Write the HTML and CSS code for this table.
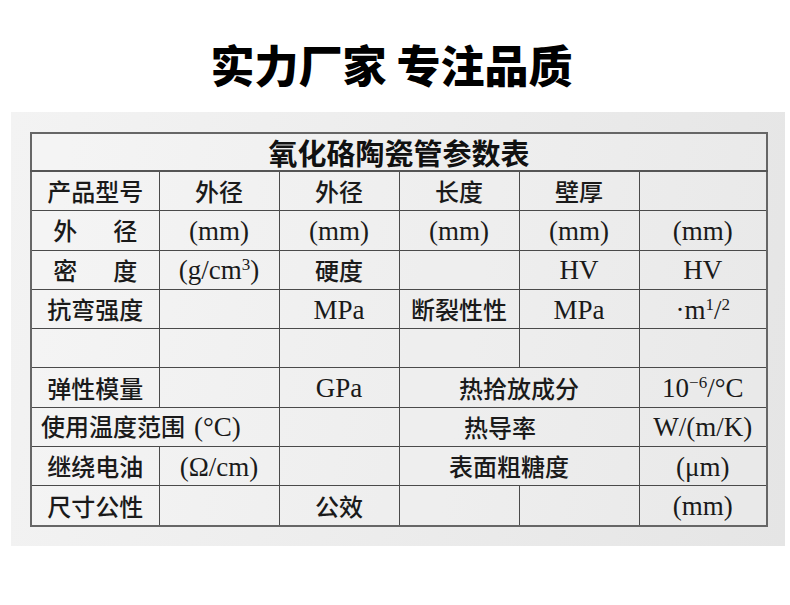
FILE: index.html
```html
<!DOCTYPE html>
<html lang="zh">
<head>
<meta charset="utf-8">
<link rel="stylesheet" href="styles.css">
</head>
<body>
<div class="heading">实力厂家 专注品质</div>
<div class="panel">
  <table class="spec">
    <colgroup>
      <col class="c-wide"><col class="c-mid"><col class="c-mid"><col class="c-mid"><col class="c-mid"><col class="c-wide">
    </colgroup>
    <tr class="title"><td colspan="6">氧化硌陶瓷管参数表</td></tr>
    <tr><td>产品型号</td><td>外径</td><td>外径</td><td>长度</td><td>壁厚</td><td></td></tr>
    <tr><td>外<span class="gap"></span>径</td><td><span class="u">(mm)</span></td><td><span class="u">(mm)</span></td><td><span class="u">(mm)</span></td><td><span class="u">(mm)</span></td><td><span class="u">(mm)</span></td></tr>
    <tr><td>密<span class="gap"></span>度</td><td><span class="u">(g/cm<sup>3</sup>)</span></td><td>硬度</td><td></td><td><span class="u">HV</span></td><td><span class="u">HV</span></td></tr>
    <tr><td>抗弯强度</td><td></td><td><span class="u">MPa</span></td><td>断裂性性</td><td><span class="u">MPa</span></td><td><span class="u">·m<sup>1</sup>/<sup>2</sup></span></td></tr>
    <tr><td></td><td></td><td></td><td></td><td></td><td></td></tr>
    <tr><td>弹性模量</td><td></td><td><span class="u">GPa</span></td><td colspan="2">热拾放成分</td><td><span class="u">10<sup>−6</sup>/°C</span></td></tr>
    <tr><td colspan="2" class="left">使用温度范围<span class="u unit-gap">(°C)</span></td><td></td><td colspan="2" class="shift">热导率</td><td><span class="u">W/(m/K)</span></td></tr>
    <tr><td>继绕电油</td><td><span class="u">(Ω/cm)</span></td><td></td><td colspan="2" class="shift-s">表面粗糖度</td><td><span class="u">(μm)</span></td></tr>
    <tr><td>尺寸公性</td><td></td><td>公效</td><td></td><td></td><td><span class="u">(mm)</span></td></tr>
  </table>
</div>
</body>
</html>
```
FILE: styles.css
```css
html, body {
  margin: 0;
  padding: 0;
  background: #ffffff;
}
body {
  width: 790px;
  height: 605px;
  overflow: hidden;
  font-family: "Noto Sans CJK SC", sans-serif;
  color: #111;
}
.heading {
  padding: 42px 7px 26px 0;
  height: 44px;
  font-size: 44px;
  line-height: 44px;
  font-weight: 900;
  text-align: center;
  color: #000;
}
.panel {
  margin-left: 11px;
  width: 755px;
  height: 414px;
  padding: 20px 0 0 19px;
  background: linear-gradient(100deg, #f3f3f3 0%, #ededed 45%, #e5e5e5 100%);
}
.spec {
  border-collapse: collapse;
  table-layout: fixed;
  width: 737px;
  border: 2px solid #666;
  background: rgba(255, 255, 255, 0.15);
}
.c-wide { width: 128px; }
.c-mid { width: 120px; }
.spec td {
  border: 1px solid #4a4a4a;
  height: 38.3px;
  padding: 0;
  text-align: center;
  vertical-align: middle;
  font-size: 24px;
  font-weight: 500;
  line-height: 28px;
  color: #1a1a1a;
  white-space: nowrap;
}
.spec tr.title td {
  height: 36px;
  font-size: 29px;
  font-weight: 700;
  color: #111;
  border-bottom: 2px solid #555;
}
.u {
  font-family: "Liberation Serif", serif;
  font-size: 27px;
  font-weight: 400;
}
.u sup {
  font-size: 17px;
  vertical-align: 9px;
  line-height: 0;
}
.unit-gap {
  margin-left: 9px;
}
.gap {
  display: inline-block;
  width: 36px;
}
.spec td.left {
  text-align: left;
  padding-left: 9px;
}
.spec td.shift {
  padding-right: 38px;
}
.spec td.shift-s {
  padding-right: 20px;
}
```
